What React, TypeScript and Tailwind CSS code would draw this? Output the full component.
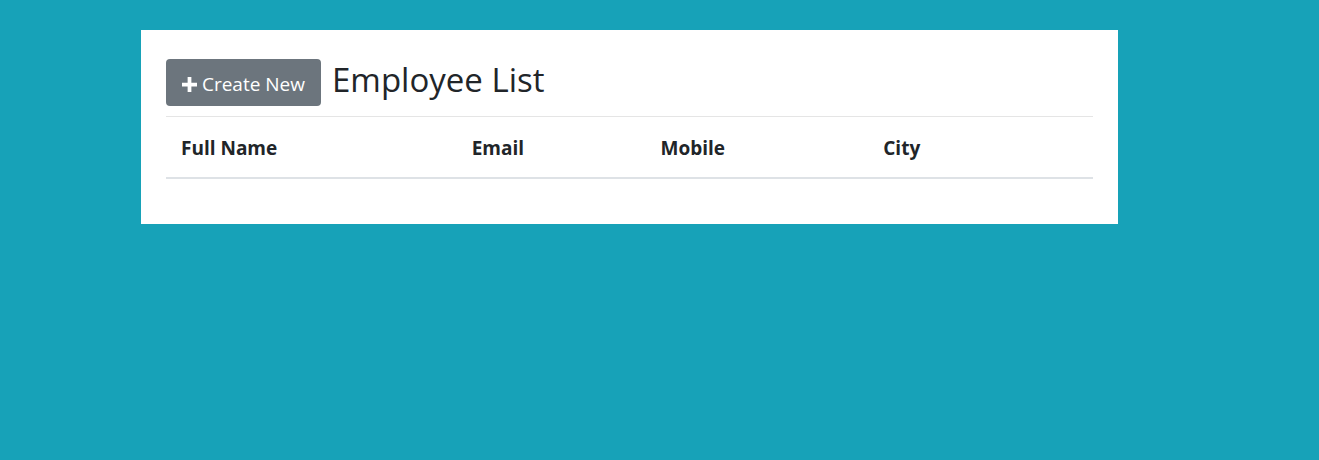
export default function App() {
  const cols = [
    { label: "Full Name", w: "w-[291px]" },
    { label: "Email", w: "w-[189px]" },
    { label: "Mobile", w: "w-[223px]" },
    { label: "City", w: "w-[225px]" },
  ];
  return (
    <main className="min-h-screen bg-[#17a2b8] pt-[30px] font-['Open_Sans',sans-serif] text-[#212529]">
      <div className="ml-[141px] w-[977px] bg-white px-[25px] pt-[29px] pb-[45px]">
        <div className="flex items-center gap-[11px] pb-[10px] border-b border-[#e5e5e5]">
          <button className="flex h-[47px] w-[155px] items-center justify-center gap-[5px] rounded-[4px] bg-[#6c757d] pt-[3px] text-[19px] text-white">
            <svg width="15" height="15" viewBox="0 0 16 16" fill="white">
              <path d="M6 0h4v6h6v4h-6v6h-4v-6h-6v-4h6z" />
            </svg>
            <span>Create New</span>
          </button>
          <h2 className="text-[33px] leading-none pb-[6px]">Employee List</h2>
        </div>
        <div className="flex h-[62px] items-center border-b-2 border-[#dee2e6] pt-[2px] text-[19px] font-bold">
          {cols.map((c) => (
            <div key={c.label} className={`${c.w} px-[15px]`}>
              {c.label}
            </div>
          ))}
        </div>
      </div>
    </main>
  );
}
